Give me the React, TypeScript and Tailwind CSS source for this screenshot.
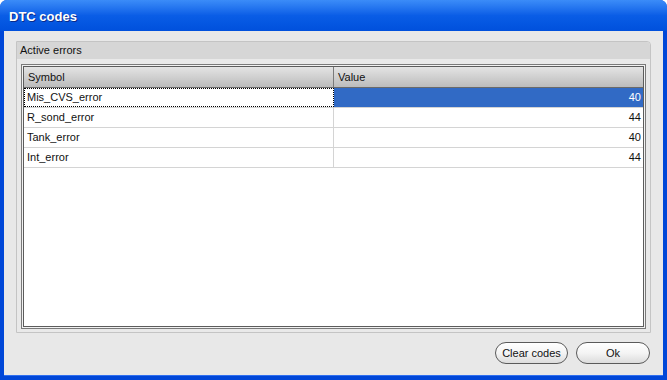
import React from 'react'

const rows = [
  { symbol: 'Mis_CVS_error', value: 40 },
  { symbol: 'R_sond_error', value: 44 },
  { symbol: 'Tank_error', value: 40 },
  { symbol: 'Int_error', value: 44 },
]

export default function App() {
  return (
    <div
      className="w-[667px] h-[380px] flex flex-col bg-[#0047d8] rounded-t-[7px] overflow-hidden text-[11px] text-[#111]"
      style={{ fontFamily: '"Liberation Sans", Arial, sans-serif' }}
    >
      {/* Title bar */}
      <div className="h-[31px] shrink-0 flex items-center pl-[9px] pt-[3px] bg-gradient-to-b from-[#3b8cf8] via-[#0a5de6] to-[#0050dc]">
        <span className="text-white font-bold text-[13px] [text-shadow:1px_1px_0_#0a2a8a]">
          DTC codes
        </span>
      </div>

      {/* Body */}
      <div className="flex-1 flex flex-col mx-[4px] mb-[4px] bg-[#e8e8e8] px-[12px] pt-[10px] border-b border-[#2f6ff0]">
        {/* Group box */}
        <div className="flex flex-col h-[292px] border border-[#c4c4c4] rounded-tr-[4px] bg-[#e9e9e9]">
          <div className="h-[17px] shrink-0 flex items-center px-[3px] bg-[#d6d6d6] rounded-tr-[4px]">
            Active errors
          </div>
          <div className="flex-1 px-[4px] pt-[5px] pb-[3px]">
            <div className="h-full border border-[#7a7a7a] p-px bg-[#f2f2f2]">
              <div className="h-full border border-[#5c5c5c] bg-white flex flex-col">
                {/* header */}
                <div className="h-[21px] shrink-0 flex bg-gradient-to-b from-[#e4e4e4] to-[#bcbcbc] border-b border-[#6a6a6a]">
                  <div className="w-[310px] flex items-center px-[4px] border-r border-[#7a7a7a]">Symbol</div>
                  <div className="flex-1 flex items-center px-[4px]">Value</div>
                </div>
                {rows.map((r, i) => (
                  <div key={r.symbol} className="h-[20px] flex border-b border-[#d4d4d4]">
                    <div
                      className={
                        i === 0
                          ? 'w-[310px] flex items-center px-[2px] border border-dotted border-black'
                          : 'w-[310px] flex items-center px-[3px] border-r border-[#d4d4d4]'
                      }
                    >
                      {r.symbol}
                    </div>
                    <div
                      className={
                        i === 0
                          ? 'flex-1 flex items-center justify-end px-[2px] bg-[#316ac5] text-white'
                          : 'flex-1 flex items-center justify-end px-[2px]'
                      }
                    >
                      {r.value}
                    </div>
                  </div>
                ))}
              </div>
            </div>
          </div>
        </div>

        {/* Buttons */}
        <div className="flex justify-end gap-[8px] pt-[9px] pr-[1px]">
          <button className="w-[73px] h-[22px] rounded-full border border-[#5a5a5a] bg-gradient-to-b from-white via-[#f4f4f4] to-[#dcdcdc] text-[11px]">
            Clear codes
          </button>
          <button className="w-[74px] h-[22px] rounded-full border border-[#5a5a5a] bg-gradient-to-b from-white via-[#f4f4f4] to-[#dcdcdc] text-[11px]">
            Ok
          </button>
        </div>
      </div>
    </div>
  )
}
